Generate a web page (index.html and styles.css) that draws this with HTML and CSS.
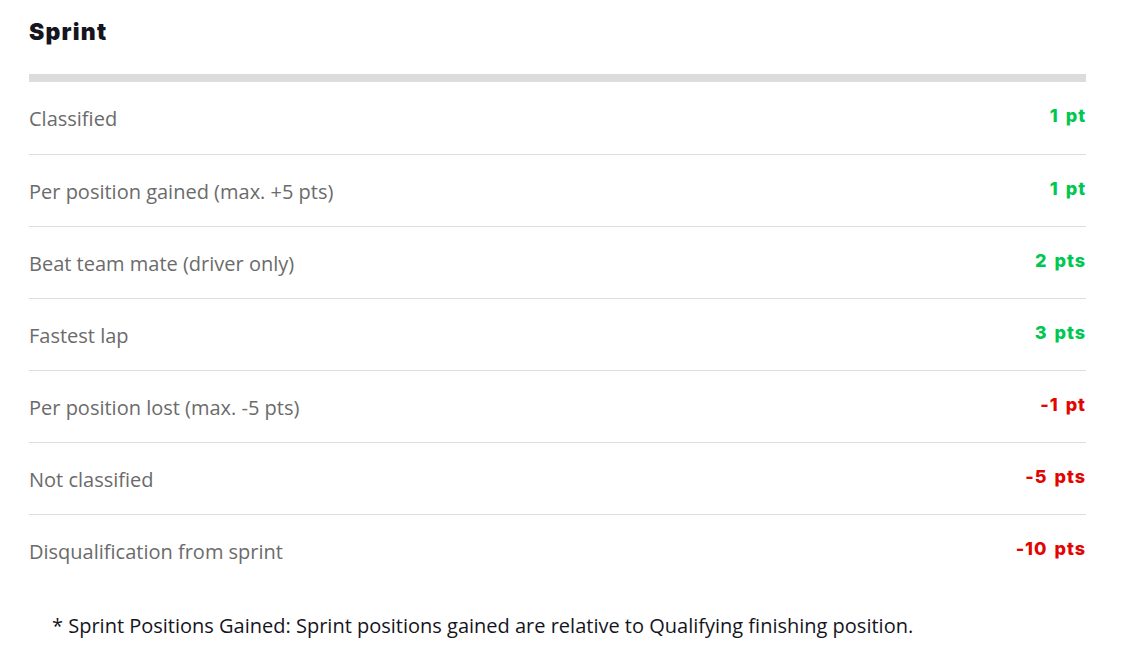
FILE: index.html
```html
<!DOCTYPE html>
<html>
<head>
<meta charset="utf-8">
<link rel="stylesheet" href="styles.css">
</head>
<body>
<div class="page">
  <h2 class="title">Sprint</h2>
  <div class="table">
    <div class="row"><span class="label">Classified</span><span class="pts pos">1 pt</span></div>
    <div class="row"><span class="label">Per position gained (max. +5 pts)</span><span class="pts pos">1 pt</span></div>
    <div class="row"><span class="label">Beat team mate (driver only)</span><span class="pts pos">2 pts</span></div>
    <div class="row"><span class="label">Fastest lap</span><span class="pts pos">3 pts</span></div>
    <div class="row"><span class="label">Per position lost (max. -5 pts)</span><span class="pts neg">-1 pt</span></div>
    <div class="row"><span class="label">Not classified</span><span class="pts neg">-5 pts</span></div>
    <div class="row"><span class="label">Disqualification from sprint</span><span class="pts neg">-10 pts</span></div>
  </div>
  <p class="note">* Sprint Positions Gained: Sprint positions gained are relative to Qualifying finishing position.</p>
</div>
</body>
</html>
```
FILE: styles.css
```css
html, body {
  margin: 0;
  padding: 0;
  background: #fff;
}
.page {
  width: 1057px;
  padding-left: 29px;
  padding-top: 17px;
  font-family: "Open Sans", sans-serif;
}
.title {
  margin: 0;
  font-family: Inter, sans-serif;
  font-weight: 900;
  font-size: 23px;
  line-height: 30px;
  color: #15151e;
  letter-spacing: 1.2px;
}
.table {
  margin-top: 27px;
  border-top: 8px solid #dcdcdc;
}
.row {
  display: flex;
  justify-content: space-between;
  align-items: center;
  height: 71px;
  border-bottom: 1px solid #dddddd;
}
.row:first-child {
  height: 72px;
}
.row:last-child {
  border-bottom: none;
}
.label {
  font-size: 20px;
  color: #6b6b6b;
  padding-top: 2px;
}
.row:first-child .label {
  padding-top: 0;
}
.pts {
  font-family: Inter, sans-serif;
  font-weight: 800;
  font-size: 18px;
  letter-spacing: 1px;
  word-spacing: 2px;
  margin-top: -4px;
}
.row:first-child .pts {
  margin-top: -6px;
}
.pos { color: #00c752; }
.neg { color: #e10600; }
.note {
  margin: 26px 0 0 23px;
  font-size: 20px;
  color: #15151e;
}
```
